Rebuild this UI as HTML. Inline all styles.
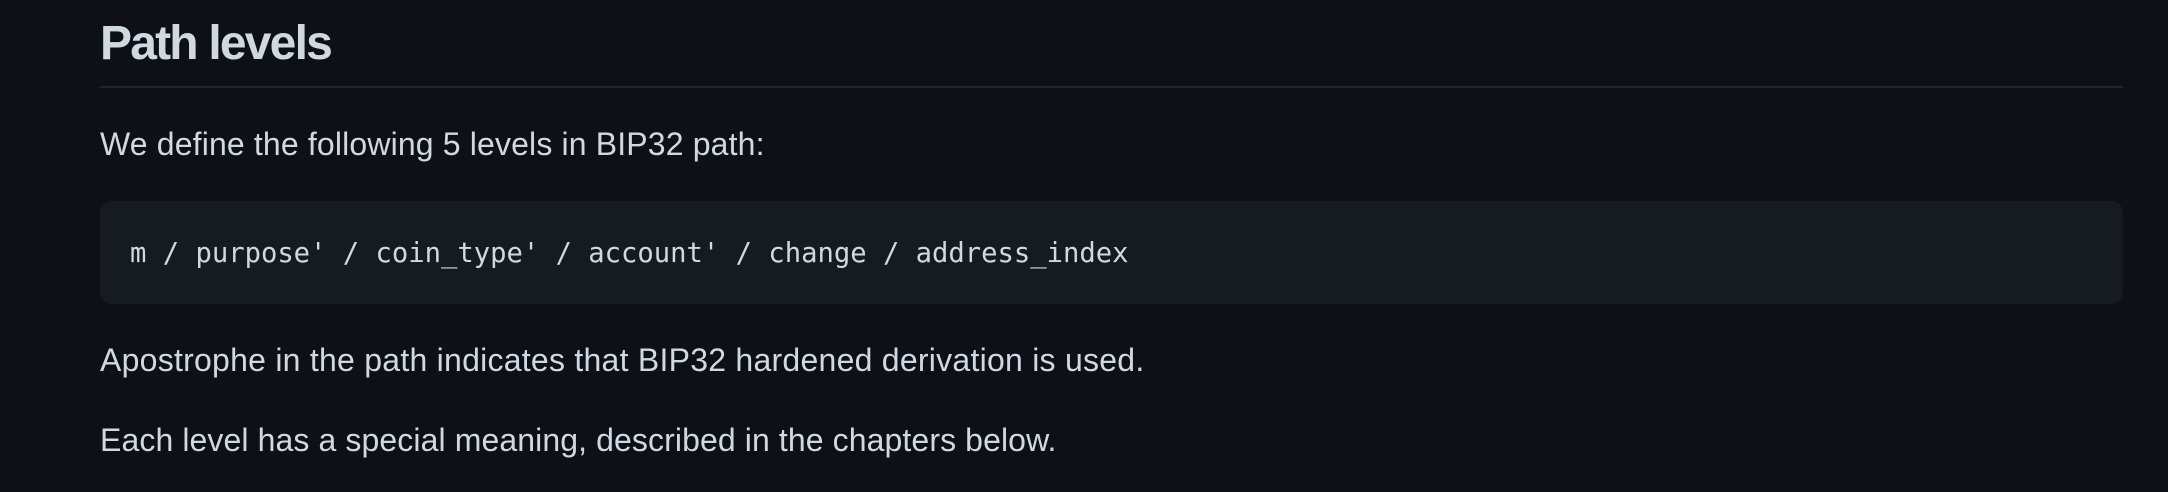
<!DOCTYPE html>
<html><head><meta charset="utf-8"><style>
html,body{margin:0;padding:0;background:#0d1117;width:2168px;height:492px;overflow:hidden}
body{position:relative;font-family:"Liberation Sans",Arial,sans-serif;color:#e6edf3}
.t{position:absolute;left:100px;white-space:nowrap;margin:0}
h2{position:absolute;left:100px;top:14px;margin:0;font-size:48px;line-height:60px;font-weight:700;color:#d1d9e0;letter-spacing:-1.8px}
.hr{position:absolute;left:100px;top:86px;width:2023px;height:2px;background:#21262d}
p{font-size:32px;line-height:40px;color:#d1d9e0;letter-spacing:0.25px}
.code{position:absolute;left:100px;top:201px;width:2023px;height:103px;background:#161b22;border-radius:12px}
.code span{position:absolute;left:30px;top:33px;font-family:"DejaVu Sans Mono","Liberation Mono",monospace;font-size:27.2px;line-height:40px;color:#d1d9e0;white-space:pre}
</style></head><body>
<h2>Path levels</h2>
<div class="hr"></div>
<p class="t" style="top:124px;letter-spacing:0.15px">We define the following 5 levels in BIP32 path:</p>
<div class="code"><span>m / purpose' / coin_type' / account' / change / address_index</span></div>
<p class="t" style="top:340px">Apostrophe in the path indicates that BIP32 hardened derivation is used.</p>
<p class="t" style="top:420px;letter-spacing:0.1px">Each level has a special meaning, described in the chapters below.</p>
</body></html>
